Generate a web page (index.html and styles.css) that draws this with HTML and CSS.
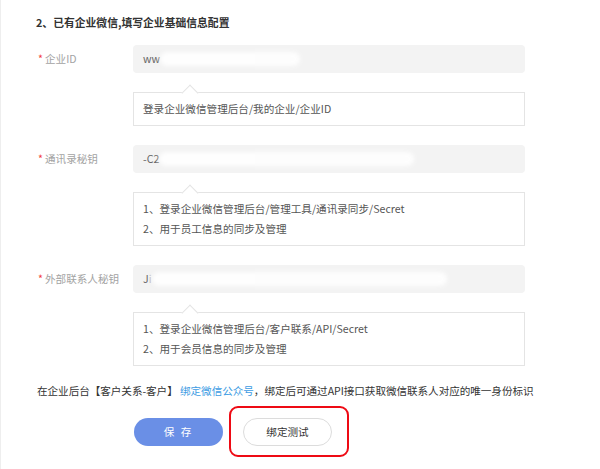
FILE: index.html
```html
<!DOCTYPE html>
<html lang="zh-CN">
<head>
<meta charset="utf-8">
<link rel="stylesheet" href="styles.css">
</head>
<body>
<div class="page">
  <h2 class="title">2、已有企业微信,填写企业基础信息配置</h2>

  <div class="field">
    <label class="label"><span class="star">*</span>企业ID</label>
    <div class="input"><span class="val">ww</span><span class="mask" style="width:140px"></span></div>
  </div>
  <div class="tip"><p>登录企业微信管理后台/我的企业/企业ID</p></div>

  <div class="field">
    <label class="label"><span class="star">*</span>通讯录秘钥</label>
    <div class="input"><span class="val">-C2</span><span class="mask" style="width:255px"></span></div>
  </div>
  <div class="tip"><p>1、登录企业微信管理后台/管理工具/通讯录同步/Secret</p><p>2、用于员工信息的同步及管理</p></div>

  <div class="field">
    <label class="label"><span class="star">*</span>外部联系人秘钥</label>
    <div class="input"><span class="val">J<span class="dim">i</span></span><span class="mask" style="width:295px"></span></div>
  </div>
  <div class="tip"><p>1、登录企业微信管理后台/客户联系/API/Secret</p><p>2、用于会员信息的同步及管理</p></div>

  <p class="note">在企业后台【客户关系-客户】 <a class="link">绑定微信公众号</a>，绑定后可通过API接口获取微信联系人对应的唯一身份标识</p>

  <div class="actions">
    <button class="btn primary">保 存</button>
    <div class="highlight"><button class="btn plain">绑定测试</button></div>
  </div>
</div>
</body>
</html>
```

FILE: styles.css
```css
* { box-sizing: border-box; }
html, body { margin: 0; padding: 0; background: #fff; }
body {
  font-family: "Noto Sans CJK SC", "Noto Sans", sans-serif;
  font-size: 10.6px;
  color: #333;
  border-left: 1px solid #eeeeee;
  height: 469px;
}
.page {
  padding: 14px 0 0 35px;
  width: 524px;
}
.title {
  margin: 0;
  font-size: 10.8px;
  line-height: 16px;
  height: 16px;
  font-weight: bold;
  color: #333;
}
.field {
  display: flex;
  align-items: center;
  margin-top: 15px;
}
.tip + .field { margin-top: 19px; }
.label {
  width: 97px;
  padding-left: 2px;
  color: #a3a3a3;
  font-size: 10.6px;
  line-height: 16px;
}
.star { color: #f23c3c; margin-right: 2px; }
.input {
  flex: 1;
  height: 28px;
  background: #f3f3f3;
  border-radius: 4px;
  display: flex;
  align-items: center;
  padding-left: 10px;
  color: #666;
  overflow: hidden;
}
.val { font-size: 10.6px; line-height: 16px; }
.dim { color: #bbb; }
.mask {
  display: inline-block;
  height: 14px;
  background: #fff;
  border-radius: 7px;
  filter: blur(2px);
  opacity: 0.9;
}
.tip {
  position: relative;
  margin: 19px 0 0 97px;
  border: 1px solid #e4e4e4;
  padding: 6px 9px 6px;
  background: #fff;
}
.tip::before {
  content: "";
  position: absolute;
  top: -6px;
  left: 50px;
  width: 11px;
  height: 11px;
  background: #fff;
  border-left: 1px solid #e4e4e4;
  border-top: 1px solid #e4e4e4;
  transform: rotate(45deg);
}
.tip p {
  margin: 0;
  line-height: 20px;
  height: 20px;
  color: #555;
  font-size: 10.6px;
}
.note {
  margin: 17px 0 0 1px;
  line-height: 16px;
  height: 16px;
  font-size: 10.6px;
  letter-spacing: -0.05px;
  color: #333;
  white-space: nowrap;
}
.link { color: #3d9ce3; }
.actions {
  display: flex;
  align-items: center;
  margin-top: 7px;
  padding-left: 98px;
}
.btn {
  font-family: inherit;
  font-size: 10.6px;
  line-height: 16px;
  height: 28px;
  width: 89px;
  border-radius: 14px;
  cursor: pointer;
  padding: 0;
}
.primary {
  background: #6a8fe6;
  border: none;
  color: #fff;
  letter-spacing: 2px;
}
.highlight {
  margin-left: 6px;
  border: 2px solid #ee0a14;
  border-radius: 9px;
  padding: 10px 15px 9px 12px;
}
.plain {
  background: #fff;
  border: 1px solid #dcdcdc;
  color: #333;
}
```
